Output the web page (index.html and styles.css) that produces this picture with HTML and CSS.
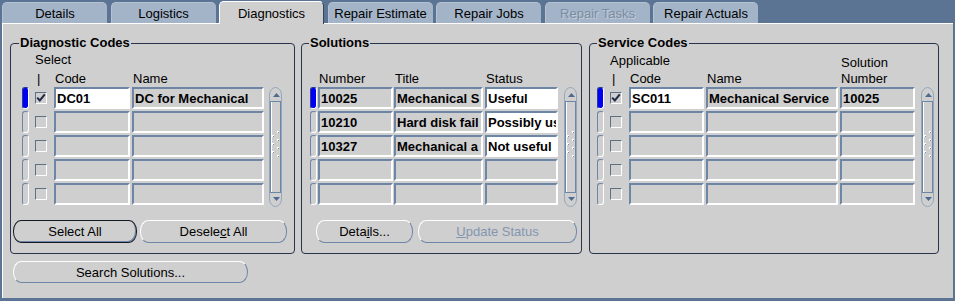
FILE: index.html
```html
<!DOCTYPE html>
<html lang="en">
<head>
    <meta charset="UTF-8">
    <title>Diagnostics</title>
    <link rel="stylesheet" href="styles.css">
</head>
<body>
    <div id="tabs">
        <div class="tab">Details</div>
        <div class="tab">Logistics</div>
        <div class="tab active">Diagnostics</div>
        <div class="tab">Repair Estimate</div>
        <div class="tab">Repair Jobs</div>
        <div class="tab disabled">Repair Tasks</div>
        <div class="tab">Repair Actuals</div>
    </div>

    <div id="canvas">
        <div id="groups">

            <!-- Diagnostic codes -->
            <div class="group diag">
                <div class="groupTitle">Diagnostic Codes</div>
                <div class="line head">
                    <span></span>
                    <span class="sel">Select<br><span class="bar">|</span></span>
                    <span>Code</span>
                    <span>Name</span>
                </div>
                <div class="block">
                    <div class="rows">
                        <div class="line">
                            <span class="ind on"></span>
                            <span class="chk"><svg width="10" height="10" viewBox="0 0 10 10"><polyline points="1.2,4.6 3.8,7.4 8.8,1.4" fill="none" stroke="#1f2b45" stroke-width="2"/></svg></span>
                            <span class="fld edit code">DC01</span>
                            <span class="fld name">DC for Mechanical</span>
                        </div>
                        <div class="line">
                            <span class="ind"></span>
                            <span class="chk"></span>
                            <span class="fld code"></span>
                            <span class="fld name"></span>
                        </div>
                        <div class="line">
                            <span class="ind"></span>
                            <span class="chk"></span>
                            <span class="fld code"></span>
                            <span class="fld name"></span>
                        </div>
                        <div class="line">
                            <span class="ind"></span>
                            <span class="chk"></span>
                            <span class="fld code"></span>
                            <span class="fld name"></span>
                        </div>
                        <div class="line">
                            <span class="ind"></span>
                            <span class="chk"></span>
                            <span class="fld code"></span>
                            <span class="fld name"></span>
                        </div>
                    </div>
                    <svg class="scroll" width="15" height="120" viewBox="0 0 15 120">
                        <path d="M1.5 8 A6 7.5 0 0 1 13.5 8 V112 A6 7.5 0 0 1 1.5 112 Z" fill="none" stroke="#95a7bd"/>
                        <path d="M5 10 L8.5 6 L12 10 Z" fill="#4e6a8e"/>
                        <rect x="2.5" y="14.5" width="10" height="91" fill="none" stroke="#6e86a6"/>
                        <line x1="3.5" y1="15" x2="3.5" y2="105" stroke="#fff"/>
                        <g fill="#fff">
                            <rect x="9" y="44" width="2" height="2"/><rect x="4" y="48" width="2" height="2"/>
                            <rect x="9" y="52" width="2" height="2"/><rect x="4" y="56" width="2" height="2"/>
                            <rect x="9" y="60" width="2" height="2"/><rect x="4" y="64" width="2" height="2"/>
                            <rect x="9" y="68" width="2" height="2"/>
                        </g>
                        <g fill="#7d8fa6">
                            <rect x="10" y="45" width="1" height="1"/><rect x="5" y="49" width="1" height="1"/>
                            <rect x="10" y="53" width="1" height="1"/><rect x="5" y="57" width="1" height="1"/>
                            <rect x="10" y="61" width="1" height="1"/><rect x="5" y="65" width="1" height="1"/>
                            <rect x="10" y="69" width="1" height="1"/>
                        </g>
                        <path d="M5 110 L12 110 L8.5 114 Z" fill="#4e6a8e"/>
                    </svg>
                </div>
                <div class="buttons">
                    <button class="btn default" id="btnSelectAll">Select All</button>
                    <button class="btn" id="btnDeselectAll">Desele<u>c</u>t All</button>
                </div>
            </div>

            <!-- Solutions -->
            <div class="group sol">
                <div class="groupTitle">Solutions</div>
                <div class="line head">
                    <span></span>
                    <span>Number</span>
                    <span>Title</span>
                    <span>Status</span>
                </div>
                <div class="block">
                    <div class="rows">
                        <div class="line">
                            <span class="ind on"></span>
                            <span class="fld num">10025</span>
                            <span class="fld title">Mechanical S</span>
                            <span class="fld edit status">Useful</span>
                        </div>
                        <div class="line">
                            <span class="ind"></span>
                            <span class="fld num">10210</span>
                            <span class="fld title">Hard disk fail</span>
                            <span class="fld edit status">Possibly us</span>
                        </div>
                        <div class="line">
                            <span class="ind"></span>
                            <span class="fld num">10327</span>
                            <span class="fld title">Mechanical a</span>
                            <span class="fld edit status">Not useful</span>
                        </div>
                        <div class="line">
                            <span class="ind"></span>
                            <span class="fld num"></span>
                            <span class="fld title"></span>
                            <span class="fld status"></span>
                        </div>
                        <div class="line">
                            <span class="ind"></span>
                            <span class="fld num"></span>
                            <span class="fld title"></span>
                            <span class="fld status"></span>
                        </div>
                    </div>
                    <svg class="scroll" width="15" height="120" viewBox="0 0 15 120">
                        <path d="M1.5 8 A6 7.5 0 0 1 13.5 8 V112 A6 7.5 0 0 1 1.5 112 Z" fill="none" stroke="#95a7bd"/>
                        <path d="M5 10 L8.5 6 L12 10 Z" fill="#4e6a8e"/>
                        <rect x="2.5" y="14.5" width="10" height="91" fill="none" stroke="#6e86a6"/>
                        <line x1="3.5" y1="15" x2="3.5" y2="105" stroke="#fff"/>
                        <g fill="#fff">
                            <rect x="9" y="44" width="2" height="2"/><rect x="4" y="48" width="2" height="2"/>
                            <rect x="9" y="52" width="2" height="2"/><rect x="4" y="56" width="2" height="2"/>
                            <rect x="9" y="60" width="2" height="2"/><rect x="4" y="64" width="2" height="2"/>
                            <rect x="9" y="68" width="2" height="2"/>
                        </g>
                        <g fill="#7d8fa6">
                            <rect x="10" y="45" width="1" height="1"/><rect x="5" y="49" width="1" height="1"/>
                            <rect x="10" y="53" width="1" height="1"/><rect x="5" y="57" width="1" height="1"/>
                            <rect x="10" y="61" width="1" height="1"/><rect x="5" y="65" width="1" height="1"/>
                            <rect x="10" y="69" width="1" height="1"/>
                        </g>
                        <path d="M5 110 L12 110 L8.5 114 Z" fill="#4e6a8e"/>
                    </svg>
                </div>
                <div class="buttons">
                    <button class="btn" id="btnDetails">Deta<u>i</u>ls...</button>
                    <button class="btn disabled" id="btnUpdateStatus"><u>U</u>pdate Status</button>
                </div>
            </div>

            <!-- Service codes -->
            <div class="group serv">
                <div class="groupTitle">Service Codes</div>
                <div class="line head">
                    <span></span>
                    <span class="appl">Applicable<br><span class="bar">|</span></span>
                    <span>Code</span>
                    <span>Name</span>
                    <span>Solution<br>Number</span>
                </div>
                <div class="block">
                    <div class="rows">
                        <div class="line">
                            <span class="ind on"></span>
                            <span class="chk"><svg width="10" height="10" viewBox="0 0 10 10"><polyline points="1.2,4.6 3.8,7.4 8.8,1.4" fill="none" stroke="#1f2b45" stroke-width="2"/></svg></span>
                            <span class="fld edit code">SC011</span>
                            <span class="fld name">Mechanical Service</span>
                            <span class="fld num">10025</span>
                        </div>
                        <div class="line">
                            <span class="ind"></span>
                            <span class="chk"></span>
                            <span class="fld code"></span>
                            <span class="fld name"></span>
                            <span class="fld num"></span>
                        </div>
                        <div class="line">
                            <span class="ind"></span>
                            <span class="chk"></span>
                            <span class="fld code"></span>
                            <span class="fld name"></span>
                            <span class="fld num"></span>
                        </div>
                        <div class="line">
                            <span class="ind"></span>
                            <span class="chk"></span>
                            <span class="fld code"></span>
                            <span class="fld name"></span>
                            <span class="fld num"></span>
                        </div>
                        <div class="line">
                            <span class="ind"></span>
                            <span class="chk"></span>
                            <span class="fld code"></span>
                            <span class="fld name"></span>
                            <span class="fld num"></span>
                        </div>
                    </div>
                    <svg class="scroll" width="15" height="120" viewBox="0 0 15 120">
                        <path d="M1.5 8 A6 7.5 0 0 1 13.5 8 V112 A6 7.5 0 0 1 1.5 112 Z" fill="none" stroke="#95a7bd"/>
                        <path d="M5 10 L8.5 6 L12 10 Z" fill="#4e6a8e"/>
                        <rect x="2.5" y="14.5" width="10" height="91" fill="none" stroke="#6e86a6"/>
                        <line x1="3.5" y1="15" x2="3.5" y2="105" stroke="#fff"/>
                        <g fill="#fff">
                            <rect x="9" y="44" width="2" height="2"/><rect x="4" y="48" width="2" height="2"/>
                            <rect x="9" y="52" width="2" height="2"/><rect x="4" y="56" width="2" height="2"/>
                            <rect x="9" y="60" width="2" height="2"/><rect x="4" y="64" width="2" height="2"/>
                            <rect x="9" y="68" width="2" height="2"/>
                        </g>
                        <g fill="#7d8fa6">
                            <rect x="10" y="45" width="1" height="1"/><rect x="5" y="49" width="1" height="1"/>
                            <rect x="10" y="53" width="1" height="1"/><rect x="5" y="57" width="1" height="1"/>
                            <rect x="10" y="61" width="1" height="1"/><rect x="5" y="65" width="1" height="1"/>
                            <rect x="10" y="69" width="1" height="1"/>
                        </g>
                        <path d="M5 110 L12 110 L8.5 114 Z" fill="#4e6a8e"/>
                    </svg>
                </div>
            </div>
        </div>

        <button class="btn" id="btnSearch">Search Solutions...</button>
    </div>
</body>
</html>
```

FILE: styles.css
```css
body {
    margin: 0;
    width: 955px;
    height: 301px;
    overflow: hidden;
    background-color: #5b7494;
    font-family: "Liberation Sans", Arial, sans-serif;
    font-size: 13px;
    color: #000;
}

/* tab strip */
#tabs {
    display: flex;
    align-items: flex-end;
    gap: 3.5px;
    height: 23px;
    padding-left: 2px;
}

.tab {
    box-sizing: border-box;
    width: 105px;
    height: 21px;
    padding-top: 1px;
    line-height: 19px;
    text-align: center;
    white-space: nowrap;
    background-color: #a3b4c8;
    border-top: 1px solid #b4c2d3;
    border-left: 1px solid #b4c2d3;
    border-radius: 5px 5px 0 0;
}

.tab.active {
    position: relative;
    z-index: 1;
    height: 23px;
    padding-top: 2px;
    margin-bottom: -1px;
    background-color: #cfcfcf;
    border-top-color: #fff;
    border-left-color: #fff;
    border-right: 1px solid #34445c;
}

.tab.disabled {
    color: #7b8ca2;
    text-shadow: 1px 1px 0 #c3cedb;
}

/* content canvas */
#canvas {
    box-sizing: border-box;
    width: 951px;
    height: 275px;
    margin-left: 2px;
    padding: 19px 0 0 7px;
    background-color: #cfcfcf;
    border-top: 1px solid #fff;
    border-left: 1px solid #fff;
}

#groups {
    display: flex;
    gap: 6px;
}

.group {
    box-sizing: border-box;
    display: flex;
    flex-direction: column;
    padding-bottom: 10px;
    border: 1px solid #27344a;
    border-radius: 4px;
}

.diag { width: 285px; }
.sol { width: 281px; }
.serv { width: 350px; margin-left: 1px; }

.groupTitle {
    align-self: flex-start;
    margin: -9px 0 0 7px;
    padding: 0 1px;
    line-height: 15px;
    font-weight: bold;
    background-color: #cfcfcf;
}

.diag .groupTitle { margin-left: 8px; }

/* column layout shared by header and rows */
.line {
    display: grid;
    justify-items: start;
}

.diag .line { grid-template-columns: 13px 19px 78px 132px; }
.sol .line { grid-template-columns: 8px 76px 91px 73px; }
.serv .line { grid-template-columns: 13px 19px 77px 134px 75px; }

.diag .head, .diag .block { margin-left: 11px; }
.sol .head, .sol .block { margin-left: 8px; }
.serv .head, .serv .block { margin-left: 7px; }

.head {
    height: 37px;
    align-items: end;
    line-height: 16px;
    white-space: nowrap;
}

.head > span {
    padding-left: 1px;
}

.head .sel {
    padding-left: 0;
    line-height: 19px;
    margin-bottom: -1px;
}

.head .appl {
    padding-left: 0;
    line-height: 18px;
    margin-bottom: -1px;
}

.bar {
    padding-left: 2px;
}

.block {
    display: flex;
    align-items: flex-start;
}

.rows {
    display: flex;
    flex-direction: column;
    gap: 2px;
}

.scroll {
    display: block;
    flex: none;
    margin-left: 5px;
}

.diag .scroll { margin-left: 4px; }

/* record indicator */
.ind {
    box-sizing: border-box;
    width: 7px;
    height: 22px;
    border: 1px solid;
    border-color: #6e86a6 #fff #fff #6e86a6;
    border-radius: 3px;
}

.ind.on {
    background-color: #0000f4;
    border-color: #2a3a8c #fff #fff #2a3a8c;
}

.chk {
    box-sizing: border-box;
    align-self: center;
    width: 12px;
    height: 12px;
    border: 1px solid;
    border-color: #5f6f85 #fff #fff #5f6f85;
}

.chk svg {
    display: block;
}

/* text items */
.fld {
    box-sizing: border-box;
    height: 22px;
    padding: 2px 0 0 1px;
    line-height: 16px;
    font-weight: bold;
    white-space: nowrap;
    overflow: hidden;
    border: 2px solid;
    border-color: #6e86a6 #fff #fff #6e86a6;
}

.fld.edit {
    background-color: #fff;
}

.diag .code { width: 76px; }
.diag .name { width: 132px; }
.sol .num { width: 75px; }
.sol .title { width: 89px; }
.sol .status { width: 73px; }
.serv .code { width: 75px; }
.serv .name { width: 132px; }
.serv .num { width: 75px; }

/* buttons */
.buttons {
    display: flex;
    margin-top: 13px;
}

.diag .buttons { margin-left: 2px; gap: 3px; }
.sol .buttons { margin-left: 14px; gap: 5px; }

.btn {
    box-sizing: border-box;
    height: 23px;
    padding: 0;
    font: inherit;
    color: #000;
    background: transparent;
    border: 1px solid;
    border-color: #fff #6e86a6 #6e86a6 #fff;
    border-radius: 8px / 11px;
}

.btn.default {
    border-color: #141a24;
    box-shadow: inset -1px -1px 0 #6e86a6;
}

.btn.disabled {
    color: #8396b0;
}

#btnSelectAll { width: 124px; }
#btnDeselectAll { width: 147px; }
#btnDetails { width: 97px; }
#btnUpdateStatus { width: 159px; }

#btnSearch {
    display: block;
    width: 235px;
    height: 22px;
    margin: 7px 0 0 3px;
}
```
